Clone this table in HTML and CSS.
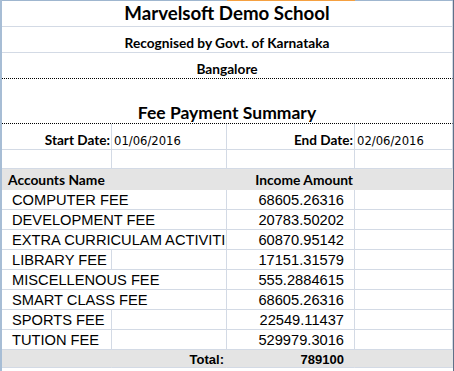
FILE: index.html
```html
<!DOCTYPE html>
<html lang="en">
<head>
<meta charset="utf-8">
<title>Fee Payment Summary</title>
<link rel="stylesheet" href="styles.css">
</head>
<body>
<div class="sheet">
  <div class="edge">
    <span></span><span></span><span class="edge-active"></span><span></span>
  </div>
  <div class="grid">
    <div class="cell span4 title">Marvelsoft Demo School</div>
    <div class="cell span4 sub">Recognised by Govt. of Karnataka</div>
    <div class="cell span4 sub dotted">Bangalore</div>
    <div class="cell span4 report dotted">Fee Payment Summary</div>

    <div class="cell label right">Start Date:</div>
    <div class="cell date">01/06/2016</div>
    <div class="cell label right">End Date:</div>
    <div class="cell date">02/06/2016</div>

    <div class="cell blank"></div>
    <div class="cell blank"></div>
    <div class="cell blank"></div>
    <div class="cell blank"></div>

    <div class="cell head span2 head-name">Accounts Name</div>
    <div class="cell head right head-amount">Income Amount</div>
    <div class="cell head"></div>

    <div class="cell row span2 name">COMPUTER FEE</div>
    <div class="cell row amount">68605.26316</div>
    <div class="cell row"></div>

    <div class="cell row span2 name">DEVELOPMENT FEE</div>
    <div class="cell row amount">20783.50202</div>
    <div class="cell row"></div>

    <div class="cell row span2 name">EXTRA CURRICULAM ACTIVITIES</div>
    <div class="cell row amount">60870.95142</div>
    <div class="cell row"></div>

    <div class="cell row name">LIBRARY FEE</div>
    <div class="cell row"></div>
    <div class="cell row amount">17151.31579</div>
    <div class="cell row"></div>

    <div class="cell row span2 name">MISCELLENOUS FEE</div>
    <div class="cell row amount">555.2884615</div>
    <div class="cell row"></div>

    <div class="cell row span2 name">SMART CLASS FEE</div>
    <div class="cell row amount">68605.26316</div>
    <div class="cell row"></div>

    <div class="cell row name">SPORTS FEE</div>
    <div class="cell row"></div>
    <div class="cell row amount">22549.11437</div>
    <div class="cell row"></div>

    <div class="cell row name">TUTION FEE</div>
    <div class="cell row"></div>
    <div class="cell row amount">529979.3016</div>
    <div class="cell row"></div>

    <div class="cell total"></div>
    <div class="cell total total-label">Total:</div>
    <div class="cell total total-value">789100</div>
    <div class="cell total"></div>
  </div>
</div>
</body>
</html>
```

FILE: styles.css
```css
* {
  box-sizing: border-box;
}

html, body {
  margin: 0;
  padding: 0;
  background: #ffffff;
}

body {
  width: 454px;
  height: 371px;
  overflow: hidden;
  color: #000000;
  font-family: "Liberation Sans", Arial, sans-serif;
}

.sheet {
  width: 454px;
  border-left: 2px solid #a7bdd5;
  border-right: 1px solid #5f7189;
}

/* column header edge: light blue line with the active column in orange */
.edge {
  display: grid;
  grid-template-columns: 110px 115px 128px 98px;
  height: 1px;
}

.edge span {
  background: #9fb6cf;
}

.edge .edge-active {
  background: #f5a040;
}

.grid {
  display: grid;
  grid-template-columns: 110px 115px 128px 98px;
  grid-template-rows: 26px 26px 26px 45px 26px 19px 21px repeat(8, 20px) 18px 4px;
}

.cell {
  display: flex;
  align-items: flex-end;
  min-width: 0;
  overflow: hidden;
  white-space: nowrap;
  line-height: 1;
  border-right: 1px solid #d3dae5;
  border-bottom: 1px solid #d3dae5;
}

.span4 {
  grid-column: span 4;
  justify-content: center;
}

.span2 {
  grid-column: span 2;
}

.right {
  justify-content: flex-end;
}

.dotted {
  border-bottom: 1px dotted #000000;
}

.title {
  font-family: Lato, "Open Sans", sans-serif;
  font-weight: 700;
  font-size: 18.7px;
  padding-bottom: 3px;
}

.sub {
  font-family: Lato, "Open Sans", sans-serif;
  font-weight: 700;
  font-size: 13.7px;
  padding-bottom: 2px;
}

.report {
  font-family: Lato, "Open Sans", sans-serif;
  font-weight: 700;
  font-size: 17.5px;
  padding-bottom: 2px;
}

.label {
  font-family: Lato, "Open Sans", sans-serif;
  font-weight: 700;
  font-size: 13.6px;
  padding-right: 1px;
  padding-bottom: 1px;
}

.date {
  font-family: "DejaVu Sans", Tahoma, sans-serif;
  font-size: 11.6px;
  padding-left: 2px;
  padding-bottom: 1px;
}

.head {
  background: #e4e4e4;
  border-color: #e4e4e4;
  font-family: Lato, "Open Sans", sans-serif;
  font-weight: 700;
  font-size: 13.8px;
  padding-bottom: 2px;
}

.head-name {
  padding-left: 6px;
}

.head-amount {
  padding-right: 1px;
}

.row {
  font-size: 14.67px;
  padding-bottom: 1px;
}

.name {
  padding-left: 10px;
}

.amount {
  justify-content: flex-end;
  padding-right: 10px;
}

.total {
  background: #e4e4e4;
  border-color: #e4e4e4;
  border-bottom-color: #d3dae5;
  font-weight: 700;
  font-size: 13px;
  padding-bottom: 1px;
}

.total-label {
  justify-content: flex-end;
  padding-right: 2px;
}

.total-value {
  justify-content: flex-end;
  padding-right: 10px;
}
```
